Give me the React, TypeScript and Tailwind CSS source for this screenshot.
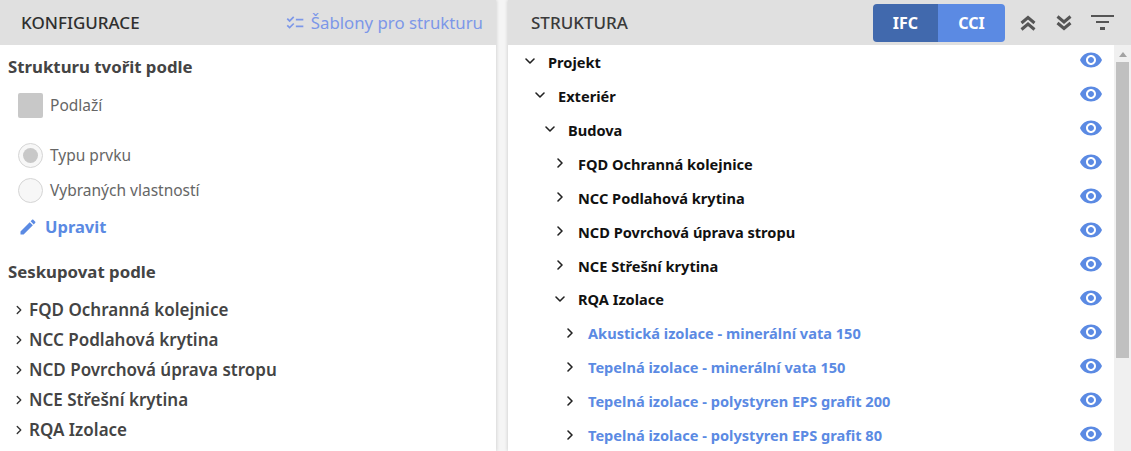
import { ChevronDown, ChevronRight } from "lucide-react";

const groups = [
	"FQD Ochranná kolejnice",
	"NCC Podlahová krytina",
	"NCD Povrchová úprava stropu",
	"NCE Střešní krytina",
	"RQA Izolace",
];

const tree = [
	{ label: "Projekt", level: 0, open: true, lowered: true },
	{ label: "Exteriér", level: 1, open: true, lowered: true },
	{ label: "Budova", level: 2, open: true, lowered: true },
	{ label: "FQD Ochranná kolejnice", level: 3, lowered: true },
	{ label: "NCC Podlahová krytina", level: 3, lowered: true },
	{ label: "NCD Povrchová úprava stropu", level: 3, lowered: true },
	{ label: "NCE Střešní krytina", level: 3, lowered: true },
	{ label: "RQA Izolace", level: 3, open: true },
	{ label: "Akustická izolace - minerální vata 150", level: 4, leaf: true },
	{ label: "Tepelná izolace - minerální vata 150", level: 4, leaf: true },
	{ label: "Tepelná izolace - polystyren EPS grafit 200", level: 4, leaf: true },
	{ label: "Tepelná izolace - polystyren EPS grafit 80", level: 4, leaf: true },
];

const levelPadding = ["pl-[14px]", "pl-[24px]", "pl-[34px]", "pl-[44px]", "pl-[54px]"];

const Eye = () => (
	<svg viewBox="0 0 24 24" className="h-6 w-6 shrink-0 fill-[#5b8ae3]">
		<path d="M12 4.5C7 4.5 2.73 7.61 1 12c1.73 4.39 6 7.5 11 7.5s9.27-3.11 11-7.5c-1.73-4.39-6-7.5-11-7.5zM12 17c-2.76 0-5-2.24-5-5s2.24-5 5-5 5 2.24 5 5-2.24 5-5 5zm0-8c-1.66 0-3 1.34-3 3s1.34 3 3 3 3-1.34 3-3-1.34-3-3-3z" />
	</svg>
);

const DoubleChevron = ({ up }: { up?: boolean }) => (
	<svg viewBox="0 0 16 16" className={`h-4 w-4 fill-none stroke-[#555555] stroke-[3] ${up ? "" : "rotate-180"}`}>
		<path d="M1.5 8 8 2.5 14.5 8" />
		<path d="M1.5 14.5 8 9 14.5 14.5" />
	</svg>
);

export default function App() {
	return (
		<div className="flex h-[451px] w-[1131px] overflow-hidden bg-[#f5f5f5] font-['Noto_Sans',sans-serif]">
			<section className="flex w-[496px] flex-col bg-white shadow-[1px_0_3px_rgba(0,0,0,0.12)]">
				<header className="flex h-[45px] shrink-0 items-center justify-between bg-[#e0e0e0] pl-[21px] pr-[13px]">
					<h2 className="text-[17px] font-medium text-[#2f2f2f]">KONFIGURACE</h2>
					<div className="flex items-center gap-[6px] text-[#7c97e8]">
						<svg viewBox="0 0 24 24" className="h-5 w-5 fill-current">
							<path d="M22 7h-9v2h9V7zm0 8h-9v2h9v-2zM5.54 11 2 7.46l1.41-1.41 2.12 2.12 4.24-4.24 1.41 1.41L5.54 11zm0 8L2 15.46l1.41-1.41 2.12 2.12 4.24-4.24 1.41 1.41L5.54 19z" />
						</svg>
						<span className="text-[16.8px]">Šablony pro strukturu</span>
					</div>
				</header>

				<div className="flex flex-col pl-2">
					<h3 className="mt-[10px] h-6 text-[16.8px] leading-6 font-bold text-[#444444]">Strukturu tvořit podle</h3>

					<div className="mt-[14px] ml-[10px] flex items-center gap-[7px]">
						<span className="h-[25px] w-[25px] rounded-[2px] bg-[#c8c8c8]" />
						<span className="text-[15.5px] text-[#666666]">Podlaží</span>
					</div>

					<div className="mt-[25px] ml-[10px] flex h-[25px] items-center gap-[7px]">
						<span className="flex h-[25px] w-[25px] items-center justify-center rounded-full border border-[#d5d5d5] bg-[#f7f7f7]">
							<span className="h-[15px] w-[15px] rounded-full bg-[#c8c8c8]" />
						</span>
						<span className="text-[15.5px] text-[#666666]">Typu prvku</span>
					</div>

					<div className="mt-[10px] ml-[10px] flex h-[25px] items-center gap-[7px]">
						<span className="h-[25px] w-[25px] rounded-full border border-[#d5d5d5] bg-[#f7f7f7]" />
						<span className="text-[15.5px] text-[#666666]">Vybraných vlastností</span>
					</div>

					<div className="mt-[12px] ml-[10px] flex h-6 items-center gap-[7px] text-[#5b8ae3]">
						<svg viewBox="0 0 24 24" className="h-5 w-5 fill-current">
							<path d="M3 17.25V21h3.75L17.81 9.94l-3.75-3.75L3 17.25zM20.71 7.04c.39-.39.39-1.02 0-1.41l-2.34-2.34c-.39-.39-1.02-.39-1.41 0l-1.83 1.83 3.75 3.75 1.83-1.83z" />
						</svg>
						<span className="text-[16.5px] font-bold">Upravit</span>
					</div>

					<h3 className="mt-[21px] h-6 text-[16.8px] leading-6 font-bold text-[#444444]">Seskupovat podle</h3>

					<ul className="mt-[14px] flex flex-col gap-[6px]">
						{groups.map((group) => (
							<li key={group} className="flex h-6 items-center text-[17px] font-semibold text-[#444444]">
								<ChevronRight className="ml-[4px] h-[14px] w-[14px] shrink-0 text-[#333333]" strokeWidth={2.4} />
								<span className="ml-[3px]">{group}</span>
							</li>
						))}
					</ul>
				</div>
			</section>

			<section className="ml-3 flex w-[623px] flex-col bg-white shadow-[-1px_0_3px_rgba(0,0,0,0.12)]">
				<header className="flex h-[45px] shrink-0 items-center bg-[#e0e0e0] pr-[17px] pl-[23px]">
					<h2 className="text-[17px] font-medium text-[#3a3a3a]">STRUKTURA</h2>
					<div className="ml-auto flex h-[38px] overflow-hidden rounded-[4px] text-[16px] font-bold text-white">
						<span className="flex w-[65px] items-center justify-center bg-[#4169ad]">IFC</span>
						<span className="flex w-[67px] items-center justify-center bg-[#5b8ae3]">CCI</span>
					</div>
					<div className="ml-[15px] flex gap-5">
						<DoubleChevron up />
						<DoubleChevron />
					</div>
					<div className="ml-[19px] flex w-[23px] flex-col items-center gap-[4px]">
						<span className="h-[2px] w-[23px] bg-[#555555]" />
						<span className="h-[2px] w-[13px] bg-[#555555]" />
						<span className="h-[3px] w-[5px] bg-[#555555]" />
					</div>
				</header>

				<div className="flex min-h-0 flex-1">
					<ul className="flex min-w-0 flex-1 flex-col">
						{tree.map((row) => (
							<li key={row.label} className={`flex h-[34px] shrink-0 items-center pr-[11px] ${levelPadding[row.level]}`}>
								<span className="mb-[3px] shrink-0">
									{row.open ? (
										<ChevronDown className="h-[16px] w-[16px] text-[#222222]" strokeWidth={2.4} />
									) : (
										<ChevronRight className="h-[16px] w-[16px] text-[#222222]" strokeWidth={2.4} />
									)}
								</span>
								<span
									className={`ml-[10px] text-[14.6px] font-bold ${row.leaf ? "text-[#5b8ae3]" : "text-[#111111]"} ${row.lowered ? "translate-y-px" : ""}`}
								>
									{row.label}
								</span>
								<span className="mb-[4px] ml-auto">
									<Eye />
								</span>
							</li>
						))}
					</ul>

					<div className="flex w-[17px] shrink-0 flex-col items-center bg-[#f0f0f0]">
						<span className="mt-[7px] h-0 w-0 border-x-[4px] border-b-[5px] border-x-transparent border-b-[#a3a3a3]" />
						<span className="mt-[5px] h-[296px] w-[13px] bg-[#c0c0c0]" />
					</div>
				</div>
			</section>
		</div>
	);
}
